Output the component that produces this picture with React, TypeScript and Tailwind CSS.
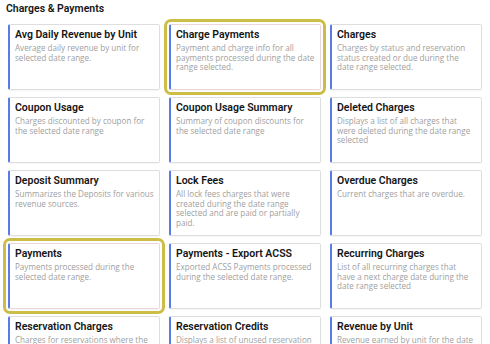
import React from "react";

type Report = { title: string; desc: string; active?: boolean };

// line breaks follow the original card layout
const reports: Report[] = [
  { title: "Avg Daily Revenue by Unit", desc: "Average daily revenue by unit for\nselected date range." },
  { title: "Charge Payments", desc: "Payment and charge info for all\npayments processed during the date\nrange selected.", active: true },
  { title: "Charges", desc: "Charges by status and reservation\nstatus created or due during the\ndate range selected." },
  { title: "Coupon Usage", desc: "Charges discounted by coupon for\nthe selected date range" },
  { title: "Coupon Usage Summary", desc: "Summary of coupon discounts for\nthe selected date range" },
  { title: "Deleted Charges", desc: "Displays a list of all charges that\nwere deleted during the date range\nselected" },
  { title: "Deposit Summary", desc: "Summarizes the Deposits for various\nrevenue sources." },
  { title: "Lock Fees", desc: "All lock fees charges that were\ncreated during the date range\nselected and are paid or partially\npaid." },
  { title: "Overdue Charges", desc: "Current charges that are overdue." },
  { title: "Payments", desc: "Payments processed during the\nselected date range.", active: true },
  { title: "Payments - Export ACSS", desc: "Exported ACSS Payments processed\nduring the selected date range." },
  { title: "Recurring Charges", desc: "List of all recurring charges that\nhave a next charge date during the\ndate range selected" },
  { title: "Reservation Charges", desc: "Charges for reservations where the\nlast day or start date falls in the date\nrange selected." },
  { title: "Reservation Credits", desc: "Displays a list of unused reservation\ncredits for the selected date range." },
  { title: "Revenue by Unit", desc: "Revenue earned by unit for the date\nrange selected." },
];

function ReportCard({ report }: { report: Report }) {
  return (
    <button
      className={
        "h-[66px] text-left flex flex-col bg-white rounded-[2px] border border-[#dedede] border-l-2 border-l-[#5a7be6] pl-[5px] pr-[1px] pt-[3px] shadow-[0_1px_1px_rgba(0,0,0,0.04)] " +
        (report.active
          ? "outline-[3px] outline-solid outline-[#cbbd45] outline-offset-[2px] border-[#ecd6dc]"
          : "")
      }
    >
      <span className="text-[10.5px] leading-[14px] font-semibold text-[#151515] font-['Roboto',sans-serif]">
        {report.title}
      </span>
      <span className="mt-[1px] whitespace-pre-line text-[8.1px] leading-[9.5px] text-[#a0a0a0] font-['Open_Sans',sans-serif]">
        {report.desc}
      </span>
    </button>
  );
}

export default function App() {
  return (
    <div className="w-[490px] h-[344px] overflow-hidden bg-white">
      <h2 className="pl-[6px] pt-[2px] h-[24px] text-[10.5px] leading-[14px] font-semibold text-[#151515] font-['Roboto',sans-serif]">
        Charges &amp; Payments
      </h2>
      <div className="ml-[8px] grid grid-cols-[152px_152px_152px] gap-x-[9px] gap-y-[7px]">
        {reports.map((r) => (
          <ReportCard key={r.title} report={r} />
        ))}
      </div>
    </div>
  );
}
